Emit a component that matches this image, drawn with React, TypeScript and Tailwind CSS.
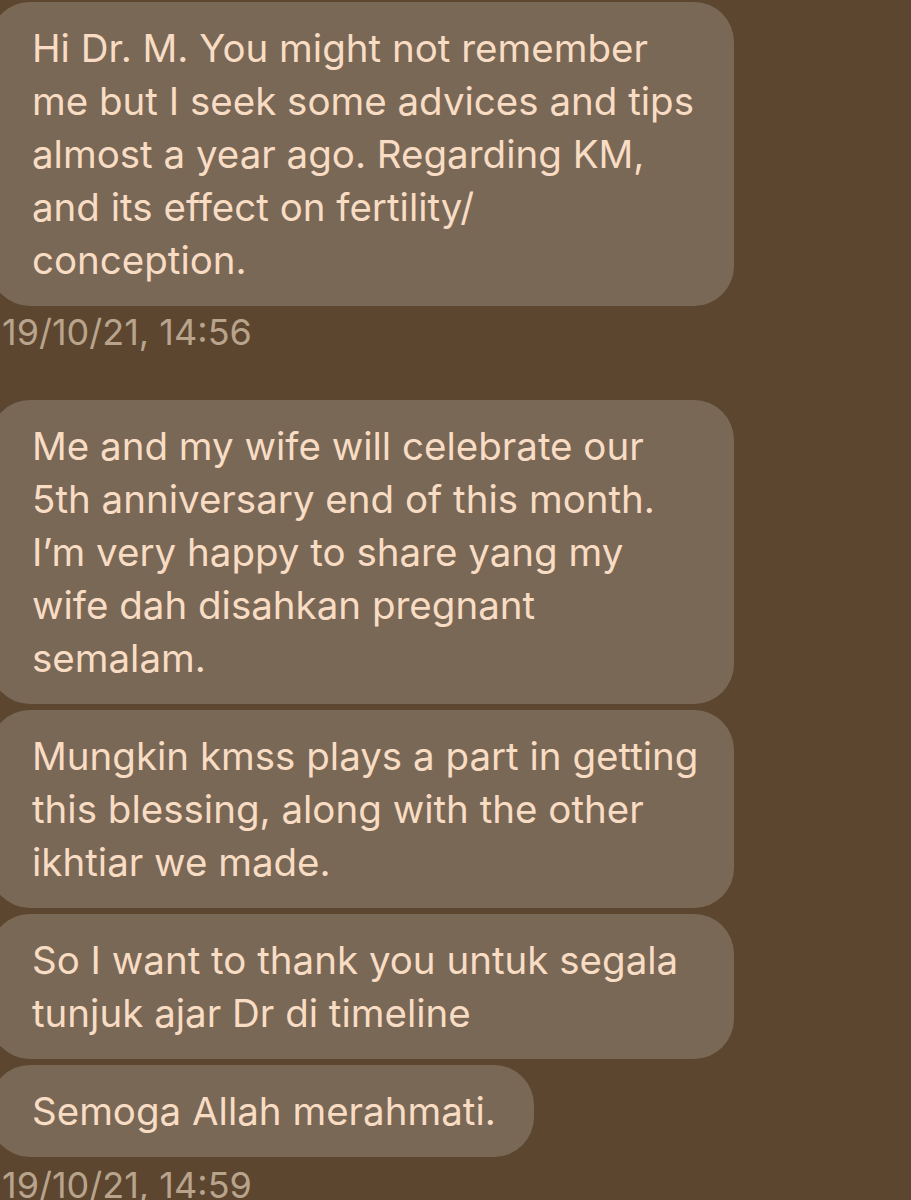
const bubble =
  "bg-[#7a6857] text-[#f8dcc3] rounded-[40px] -ml-[10px] pl-[42px] pr-[38px] py-[19.5px] text-[38.5px] leading-[53px]";

const Bubble = ({ lines, wide = true }: { lines: string[]; wide?: boolean }) => (
  <div className={`${bubble} ${wide ? "w-[744px]" : "w-fit"}`}>
    {lines.map((line) => (
      <div key={line} className="whitespace-nowrap">
        {line}
      </div>
    ))}
  </div>
);

const Stamp = ({ children }: { children: string }) => (
  <div className="text-[#b8a48d] text-[36px] leading-[40px] pl-[2px]">{children}</div>
);

export default function App() {
  return (
    <div
      className="min-h-[1200px] h-[1200px] overflow-hidden bg-[#5d462f] pt-[2px]"
      style={{ fontFamily: "Inter, 'Noto Sans', sans-serif" }}
    >
      <Bubble
        lines={[
          "Hi Dr. M. You might not remember",
          "me but I seek some advices and tips",
          "almost a year ago. Regarding KM,",
          "and its effect on fertility/",
          "conception.",
        ]}
      />
      <div className="mt-[6px]">
        <Stamp>19/10/21, 14:56</Stamp>
      </div>
      <div className="mt-[48px] flex flex-col gap-[6px]">
        <Bubble
          lines={[
            "Me and my wife will celebrate our",
            "5th anniversary end of this month.",
            "I’m very happy to share yang my",
            "wife dah disahkan pregnant",
            "semalam.",
          ]}
        />
        <Bubble
          lines={[
            "Mungkin kmss plays a part in getting",
            "this blessing, along with the other",
            "ikhtiar we made.",
          ]}
        />
        <Bubble lines={["So I want to thank you untuk segala", "tunjuk ajar Dr di timeline"]} />
        <Bubble lines={["Semoga Allah merahmati."]} wide={false} />
      </div>
      <div className="mt-[8px]">
        <Stamp>19/10/21, 14:59</Stamp>
      </div>
    </div>
  );
}
